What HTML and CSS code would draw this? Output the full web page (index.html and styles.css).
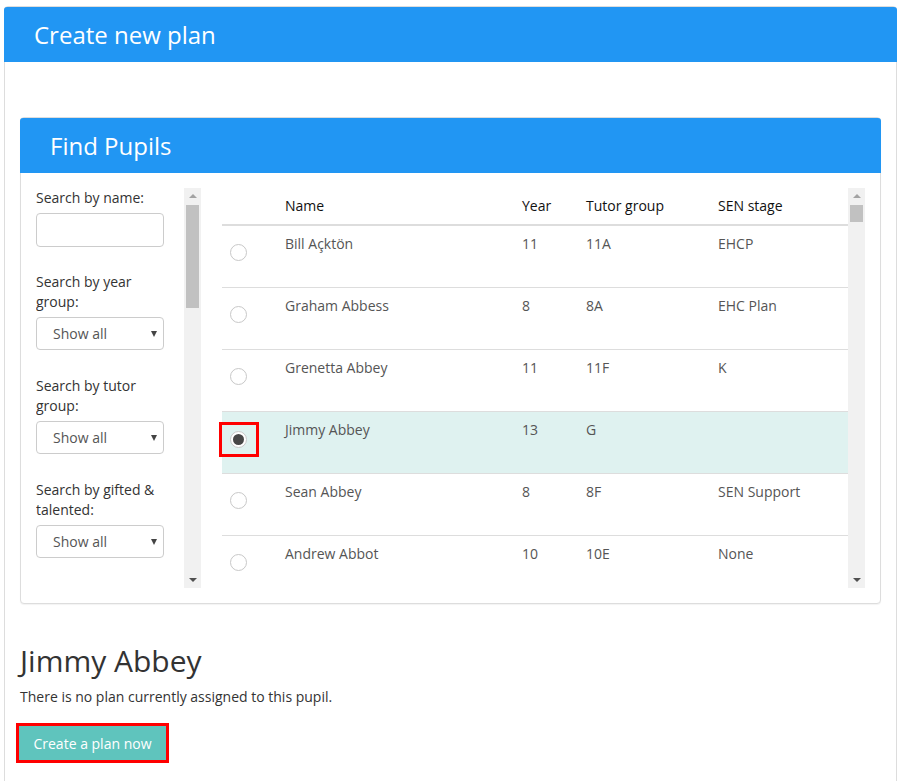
FILE: index.html
```html
<!DOCTYPE html>
<html lang="en">

<head>
    <meta charset="UTF-8">
    <meta name="viewport" content="width=device-width, initial-scale=1.0">
    <title>Create new plan</title>
    <link rel="stylesheet" href="styles.css">
</head>

<body>
    <div class="pagina">
        <div class="panel">
            <div class="panel-titulo">Create new plan</div>
            <div class="panel-cuerpo">

                <div class="panel panel-interno">
                    <div class="panel-titulo">Find Pupils</div>
                    <div class="buscador">

                        <!-- filtros de la izquierda -->
                        <div class="caja-scroll filtros-caja">
                            <div class="filtros">
                                <div class="grupo">
                                    <label>Search by name:</label>
                                    <input type="text" class="campo">
                                </div>
                                <div class="grupo">
                                    <label>Search by year group:</label>
                                    <div class="selector"><select class="campo"><option>Show all</option></select></div>
                                </div>
                                <div class="grupo">
                                    <label>Search by tutor group:</label>
                                    <div class="selector"><select class="campo"><option>Show all</option></select></div>
                                </div>
                                <div class="grupo">
                                    <label>Search by gifted &amp; talented:</label>
                                    <div class="selector"><select class="campo"><option>Show all</option></select></div>
                                </div>
                            </div>
                            <div class="barra">
                                <span class="flecha arriba"></span>
                                <div class="pista"><div class="pulgar pulgar-grande"></div></div>
                                <span class="flecha abajo"></span>
                            </div>
                        </div>

                        <!-- tabla de alumnos -->
                        <div class="caja-scroll tabla-caja">
                            <div class="tabla-scroll">
                                <table class="tabla">
                                    <colgroup>
                                        <col style="width: 55px">
                                        <col style="width: 237px">
                                        <col style="width: 64px">
                                        <col style="width: 132px">
                                        <col>
                                    </colgroup>
                                    <thead>
                                        <tr>
                                            <th></th>
                                            <th>Name</th>
                                            <th>Year</th>
                                            <th>Tutor group</th>
                                            <th>SEN stage</th>
                                        </tr>
                                    </thead>
                                    <tbody>
                                        <tr>
                                            <td><span class="radio"></span></td>
                                            <td>Bill Açktön</td>
                                            <td>11</td>
                                            <td>11A</td>
                                            <td>EHCP</td>
                                        </tr>
                                        <tr>
                                            <td><span class="radio"></span></td>
                                            <td>Graham Abbess</td>
                                            <td>8</td>
                                            <td>8A</td>
                                            <td>EHC Plan</td>
                                        </tr>
                                        <tr>
                                            <td><span class="radio"></span></td>
                                            <td>Grenetta Abbey</td>
                                            <td>11</td>
                                            <td>11F</td>
                                            <td>K</td>
                                        </tr>
                                        <tr class="elegido">
                                            <td><span class="marcado"><span class="radio activo"></span></span></td>
                                            <td>Jimmy Abbey</td>
                                            <td>13</td>
                                            <td>G</td>
                                            <td></td>
                                        </tr>
                                        <tr>
                                            <td><span class="radio"></span></td>
                                            <td>Sean Abbey</td>
                                            <td>8</td>
                                            <td>8F</td>
                                            <td>SEN Support</td>
                                        </tr>
                                        <tr>
                                            <td><span class="radio"></span></td>
                                            <td>Andrew Abbot</td>
                                            <td>10</td>
                                            <td>10E</td>
                                            <td>None</td>
                                        </tr>
                                    </tbody>
                                </table>
                            </div>
                            <div class="barra">
                                <span class="flecha arriba"></span>
                                <div class="pista"><div class="pulgar pulgar-chico"></div></div>
                                <span class="flecha abajo"></span>
                            </div>
                        </div>

                    </div>
                </div>

                <h2 class="alumno">Jimmy Abbey</h2>
                <p class="aviso">There is no plan currently assigned to this pupil.</p>
                <button class="boton-crear">Create a plan now</button>
            </div>
        </div>
    </div>
</body>

</html>
```

FILE: styles.css
```css
* {
    box-sizing: border-box;
}

body {
    margin: 0;
    background-color: white;
    font-family: "Open Sans", "Liberation Sans", sans-serif;
    font-size: 14px;
    line-height: 20px;
    color: #333;
}

.pagina {
    padding: 6px 6px 0 4px;
}

.panel {
    border: 1px solid #ddd;
    border-radius: 4px;
    background-color: white;
}

.panel-titulo {
    background-color: #2196f3;
    color: white;
    font-size: 24px;
    height: 55px;
    line-height: 55px;
    padding-left: 30px;
    margin: 0 -1px;
    border-radius: 3px 3px 0 0;
}

.panel-cuerpo {
    padding: 55px 15px 40px 15px;
}

.panel-interno {
    box-shadow: 0 1px 1px rgba(0, 0, 0, 0.05);
}

.buscador {
    display: flex;
    gap: 21px;
    padding: 15px;
}

.caja-scroll {
    display: flex;
    height: 400px;
}

.filtros-caja {
    width: 165px;
    flex-shrink: 0;
}

.filtros {
    flex: 1;
    overflow: hidden;
}

.grupo {
    width: 128px;
    margin-bottom: 26px;
}

.grupo:first-child {
    margin-bottom: 25px;
}

.grupo label {
    display: block;
    margin-bottom: 5px;
}

.campo {
    display: block;
    width: 128px;
    height: 34px;
    border: 1px solid #ccc;
    border-radius: 4px;
    background-color: white;
    font-family: inherit;
    font-size: 14px;
    color: #555;
}

.selector {
    position: relative;
}

.selector .campo {
    height: 33px;
    padding-left: 16px;
    appearance: none;
    -webkit-appearance: none;
}

.selector::after {
    content: "";
    position: absolute;
    right: 7px;
    top: 14px;
    border-left: 3.5px solid transparent;
    border-right: 3.5px solid transparent;
    border-top: 6px solid #444;
}

/* barras de scroll dibujadas */
.barra {
    width: 17px;
    flex-shrink: 0;
    background-color: #f1f1f1;
    display: flex;
    flex-direction: column;
    align-items: center;
}

.flecha {
    width: 0;
    height: 0;
    border-left: 4px solid transparent;
    border-right: 4px solid transparent;
    margin: 6px 0;
}

.arriba {
    border-bottom: 4px solid #a3a3a3;
}

.abajo {
    border-top: 4px solid #505050;
}

.pista {
    flex: 1;
    width: 100%;
    padding: 1px 2px;
}

.pulgar {
    background-color: #c1c1c1;
    width: 13px;
}

.pulgar-grande {
    height: 103px;
}

.pulgar-chico {
    height: 17px;
}

.tabla-caja {
    flex: 1;
}

.tabla-scroll {
    flex: 1;
    overflow-x: visible;
    overflow-y: clip;
}

.tabla {
    width: 100%;
    border-collapse: collapse;
    table-layout: fixed;
}

.tabla th {
    text-align: left;
    font-weight: normal;
    color: #111;
    padding: 8px;
    height: 36px;
    border-bottom: 2px solid #ddd;
}

.tabla td {
    color: #555;
    padding: 8px;
    height: 62px;
    vertical-align: top;
    border-top: 1px solid #ddd;
}

.tabla thead + tbody tr:first-child td {
    border-top: none;
}

.tabla tr.elegido td {
    background-color: #dff2f0;
}

.tabla td:first-child {
    padding-top: 18px;
}

.radio {
    display: flex;
    justify-content: center;
    align-items: center;
    width: 17px;
    height: 17px;
    border: 1px solid #c8c8c8;
    border-radius: 50%;
    background-color: white;
}

.radio.activo::after {
    content: "";
    width: 11px;
    height: 11px;
    border-radius: 50%;
    background-color: #474747;
}

.marcado {
    display: inline-flex;
    align-items: center;
    padding: 6px 0 6px 8px;
    width: 34px;
    margin: -6px 0 0 -8px;
    outline: 3px solid red;
}

.alumno {
    font-size: 30px;
    font-weight: normal;
    line-height: 33px;
    margin: 40px 0 10px 0;
}

.aviso {
    margin: 0 0 19px 0;
}

.boton-crear {
    font-family: inherit;
    font-size: 14px;
    color: white;
    background-color: #5fc4bd;
    border: none;
    width: 147px;
    height: 34px;
    padding: 0;
    text-align: center;
    outline: 3px solid red;
    margin-left: -1px;
}
```
